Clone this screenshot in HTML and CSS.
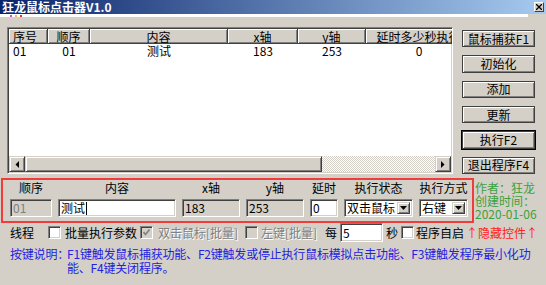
FILE: index.html
```html
<!DOCTYPE html>
<html lang="zh-CN">
<head>
    <meta charset="UTF-8">
    <title>狂龙鼠标点击器V1.0</title>
    <link rel="stylesheet" href="styles.css">
</head>
<body>
    <!-- Title Bar -->
    <div class="titlebar">
        <span class="title">狂龙鼠标点击器V1.0</span>
        <span class="close">
            <svg width="6" height="6" viewBox="0 0 6 6"><path d="M0 0L6 6M6 0L0 6" stroke="#000" stroke-width="1.3"/></svg>
        </span>
    </div>
    <div class="strip">
        <i class="dot pink"></i><i class="dot yellow"></i><i class="dot red"></i>
    </div>

    <!-- List + Buttons -->
    <div class="top">
        <div class="listview">
            <div class="lv-grid lv-head">
                <div class="lv-col first">序号</div>
                <div class="lv-col">顺序</div>
                <div class="lv-col">内容</div>
                <div class="lv-col">x轴</div>
                <div class="lv-col">y轴</div>
                <div class="lv-col">延时多少秒执行</div>
            </div>
            <div class="lv-body">
                <div class="lv-grid lv-row">
                    <div class="lv-cell first">01</div>
                    <div class="lv-cell">01</div>
                    <div class="lv-cell">测试</div>
                    <div class="lv-cell">183</div>
                    <div class="lv-cell">253</div>
                    <div class="lv-cell">0</div>
                </div>
            </div>
            <div class="hscroll">
                <div class="sb-btn">
                    <svg width="4" height="7" viewBox="0 0 4 7"><path d="M4 0V7L0.5 3.5Z" fill="#000"/></svg>
                </div>
                <div class="sb-thumb"></div>
                <div class="sb-track"></div>
                <div class="sb-btn">
                    <svg width="4" height="7" viewBox="0 0 4 7"><path d="M0 0V7L3.5 3.5Z" fill="#000"/></svg>
                </div>
            </div>
        </div>

        <div class="side-buttons">
            <button class="btn">鼠标捕获F1</button>
            <button class="btn">初始化</button>
            <button class="btn">添加</button>
            <button class="btn">更新</button>
            <button class="btn default">执行F2</button>
            <button class="btn">退出程序F4</button>
        </div>
    </div>

    <!-- Edit Box -->
    <div class="edit-row">
        <div class="edit-box">
            <div class="edit-label">顺序</div>
            <div class="edit-label">内容</div>
            <div class="edit-label">x轴</div>
            <div class="edit-label">y轴</div>
            <div class="edit-label">延时</div>
            <div class="edit-label">执行状态</div>
            <div class="edit-label">执行方式</div>

            <div class="field readonly muted">01</div>
            <div class="field">测试<span class="caret"></span></div>
            <div class="field readonly">183</div>
            <div class="field readonly">253</div>
            <div class="field">0</div>
            <div class="combo">
                <span class="combo-text">双击鼠标</span>
                <span class="combo-btn">
                    <svg width="7" height="4" viewBox="0 0 7 4"><path d="M0 0H7L3.5 4Z" fill="#000"/></svg>
                </span>
            </div>
            <div class="combo">
                <span class="combo-text">右键</span>
                <span class="combo-btn">
                    <svg width="7" height="4" viewBox="0 0 7 4"><path d="M0 0H7L3.5 4Z" fill="#000"/></svg>
                </span>
            </div>
        </div>
        <div class="credit">作者：狂龙<br>创建时间：<br>2020-01-06</div>
    </div>

    <!-- Options -->
    <div class="options">
        <span class="opt-text">线程</span>
        <span class="check cb-thread"></span>
        <span class="opt-text gap-4">批量执行参数</span>
        <span class="check disabled gap-3">
            <svg width="7" height="7" viewBox="0 0 7 7"><path d="M0.5 3L2.5 5.5L6.5 0.5" fill="none" stroke="#808080" stroke-width="1.6"/></svg>
        </span>
        <span class="opt-text dim w-84 gap-5">双击鼠标[批量]</span>
        <span class="check disabled gap-3"></span>
        <span class="opt-text dim w-60 gap-3">左键[批量]</span>
        <span class="opt-text gap-4">每</span>
        <div class="field small gap-3">5</div>
        <span class="opt-text gap-3">秒</span>
        <span class="check gap-3"></span>
        <span class="opt-text gap-2">程序自启</span>
        <span class="opt-text hint gap-2">↑隐藏控件↑</span>
    </div>

    <!-- Help -->
    <div class="help">
        <span class="help-label">按键说明：</span>
        <span class="help-text">F1键触发鼠标捕获功能、F2键触发或停止执行鼠标模拟点击功能、F3键触发程序最小化功<br>能、F4键关闭程序。</span>
    </div>
</body>
</html>
```

FILE: styles.css
```css
/* Global */
body {
    margin: 0;
    width: 546px;
    height: 285px;
    overflow: hidden;
    background-color: #d4d0c8;
    font-family: "Noto Sans CJK SC", sans-serif;
    font-size: 12px;
    color: #000;
}

/* Title Bar */
.titlebar {
    height: 14px;
    display: flex;
    align-items: center;
    justify-content: space-between;
    padding: 0 2px;
    background: linear-gradient(to right, #0a246a, #a6caf0);
}

.title {
    color: #fff;
    font-weight: bold;
    line-height: 14px;
}

.close {
    width: 10px;
    height: 10px;
    box-sizing: border-box;
    display: flex;
    align-items: center;
    justify-content: center;
    background-color: #d4d0c8;
    border: 1px solid;
    border-color: #fff #404040 #404040 #fff;
}

.strip {
    height: 3px;
    margin-right: 18px;
    background-color: #fff;
    display: flex;
    align-items: center;
    padding-left: 10px;
    gap: 3px;
}

.dot {
    width: 2px;
    height: 2px;
}

.dot.pink { background-color: #e040e0; }
.dot.yellow { background-color: #e0c040; }
.dot.red { background-color: #e03030; }

/* List View */
.top {
    display: flex;
    height: 157px;
}

.listview {
    margin: 10px 0 0 7px;
    width: 446px;
    height: 147px;
    box-sizing: border-box;
    display: flex;
    flex-direction: column;
    overflow: hidden;
    background-color: #fff;
    border: 1px solid;
    border-color: #808080 #fff #fff #808080;
    box-shadow: inset 1px 1px #404040, inset -1px -1px #d4d0c8;
    padding: 1px;
}

.lv-grid {
    display: grid;
    grid-template-columns: 39px 42px 138px 70px 68px 106px;
}

.lv-head {
    height: 15px;
    flex-shrink: 0;
}

.lv-col {
    background-color: #d4d0c8;
    text-align: center;
    line-height: 15px;
    white-space: nowrap;
    overflow: hidden;
    box-sizing: border-box;
    border-right: 1px solid #404040;
    border-bottom: 1px solid #404040;
    box-shadow: inset 1px 1px #fff, inset -1px -1px #808080;
}

.lv-col.first,
.lv-cell.first {
    text-align: left;
    padding-left: 4px;
}

.lv-body {
    flex: 1;
}

.lv-row {
    height: 14px;
}

.lv-cell {
    text-align: center;
    line-height: 14px;
    white-space: nowrap;
}

/* Horizontal Scrollbar */
.hscroll {
    height: 16px;
    display: flex;
    flex-shrink: 0;
}

.sb-btn,
.sb-thumb {
    box-sizing: border-box;
    background-color: #d4d0c8;
    border: 1px solid;
    border-color: #d4d0c8 #404040 #404040 #d4d0c8;
    box-shadow: inset 1px 1px #fff, inset -1px -1px #808080;
}

.sb-btn {
    width: 16px;
    display: flex;
    align-items: center;
    justify-content: center;
}

.sb-thumb {
    width: 297px;
}

.sb-track {
    flex: 1;
    background: repeating-conic-gradient(#fff 0 25%, #d4d0c8 0 50%) 0 0 / 2px 2px;
}

/* Side Buttons */
.side-buttons {
    margin: 13px 0 0 9px;
    width: 73px;
    display: flex;
    flex-direction: column;
    gap: 8px;
}

.btn {
    height: 18px;
    padding: 0;
    font-family: inherit;
    font-size: 12px;
    line-height: 14px;
    color: #000;
    background-color: #d4d0c8;
    border: 1px solid #404040;
    box-shadow: inset 1px 1px #fff, inset -1px -1px #808080;
}

.btn.default {
    outline: 1px solid #000;
}

/* Edit Box */
.edit-row {
    display: flex;
    margin-top: 4px;
}

.edit-box {
    margin-left: 1px;
    width: 473px;
    height: 45px;
    box-sizing: border-box;
    border: 2px solid #f03c3c;
    padding-left: 7px;
    display: grid;
    grid-template-columns: 42px 118px 58px 58px 28px 69px 49px;
    grid-template-rows: 16px 18px;
    column-gap: 6px;
    row-gap: 3px;
}

.edit-label {
    text-align: center;
    line-height: 16px;
    white-space: nowrap;
}

.field {
    height: 18px;
    box-sizing: border-box;
    padding-left: 2px;
    line-height: 14px;
    white-space: nowrap;
    background-color: #fff;
    border: 1px solid;
    border-color: #808080 #fff #fff #808080;
    box-shadow: inset 1px 1px #404040, inset -1px -1px #d4d0c8;
    display: flex;
    align-items: center;
}

.field.readonly {
    background-color: #d4d0c8;
}

.field.muted {
    color: #808080;
}

.field.small {
    width: 43px;
    height: 19px;
}

.caret {
    width: 1px;
    height: 13px;
    margin-left: 1px;
    background-color: #000;
}

.combo {
    height: 18px;
    box-sizing: border-box;
    display: flex;
    padding: 2px;
    background-color: #fff;
    border: 1px solid;
    border-color: #808080 #fff #fff #808080;
    box-shadow: inset 1px 1px #404040, inset -1px -1px #d4d0c8;
}

.combo-text {
    flex: 1;
    line-height: 12px;
    white-space: nowrap;
}

.combo-btn {
    width: 13px;
    flex-shrink: 0;
    box-sizing: border-box;
    display: flex;
    align-items: center;
    justify-content: center;
    background-color: #d4d0c8;
    border: 1px solid;
    border-color: #d4d0c8 #404040 #404040 #d4d0c8;
    box-shadow: inset 1px 1px #fff, inset -1px -1px #808080;
}

.credit {
    margin-left: 1px;
    padding-top: 3px;
    color: #3ca03c;
    line-height: 13px;
    white-space: nowrap;
}

/* Options Row */
.options {
    display: flex;
    align-items: center;
    height: 19px;
    padding-left: 10px;
}

.opt-text {
    white-space: nowrap;
    line-height: 14px;
}

.opt-text.dim {
    color: #808080;
    text-shadow: 1px 1px #fff;
}

.opt-text.hint {
    color: #ff2020;
}

.w-84 { width: 84px; }
.w-60 { width: 60px; }

.gap-2 { margin-left: 2px; }
.gap-3 { margin-left: 3px; }
.gap-4 { margin-left: 4px; }
.gap-5 { margin-left: 5px; }

.check {
    width: 13px;
    height: 13px;
    box-sizing: border-box;
    display: flex;
    align-items: center;
    justify-content: center;
    background-color: #fff;
    border: 1px solid;
    border-color: #808080 #fff #fff #808080;
    box-shadow: inset 1px 1px #404040, inset -1px -1px #d4d0c8;
}

.check.disabled {
    background-color: #d4d0c8;
}

.cb-thread {
    margin-left: 14px;
}

/* Help Text */
.help {
    display: flex;
    margin-top: 5px;
    padding-left: 10px;
    color: #2222e0;
    line-height: 14px;
    letter-spacing: -0.2px;
    white-space: nowrap;
}

.help-label {
    width: 57px;
    flex-shrink: 0;
}
```
